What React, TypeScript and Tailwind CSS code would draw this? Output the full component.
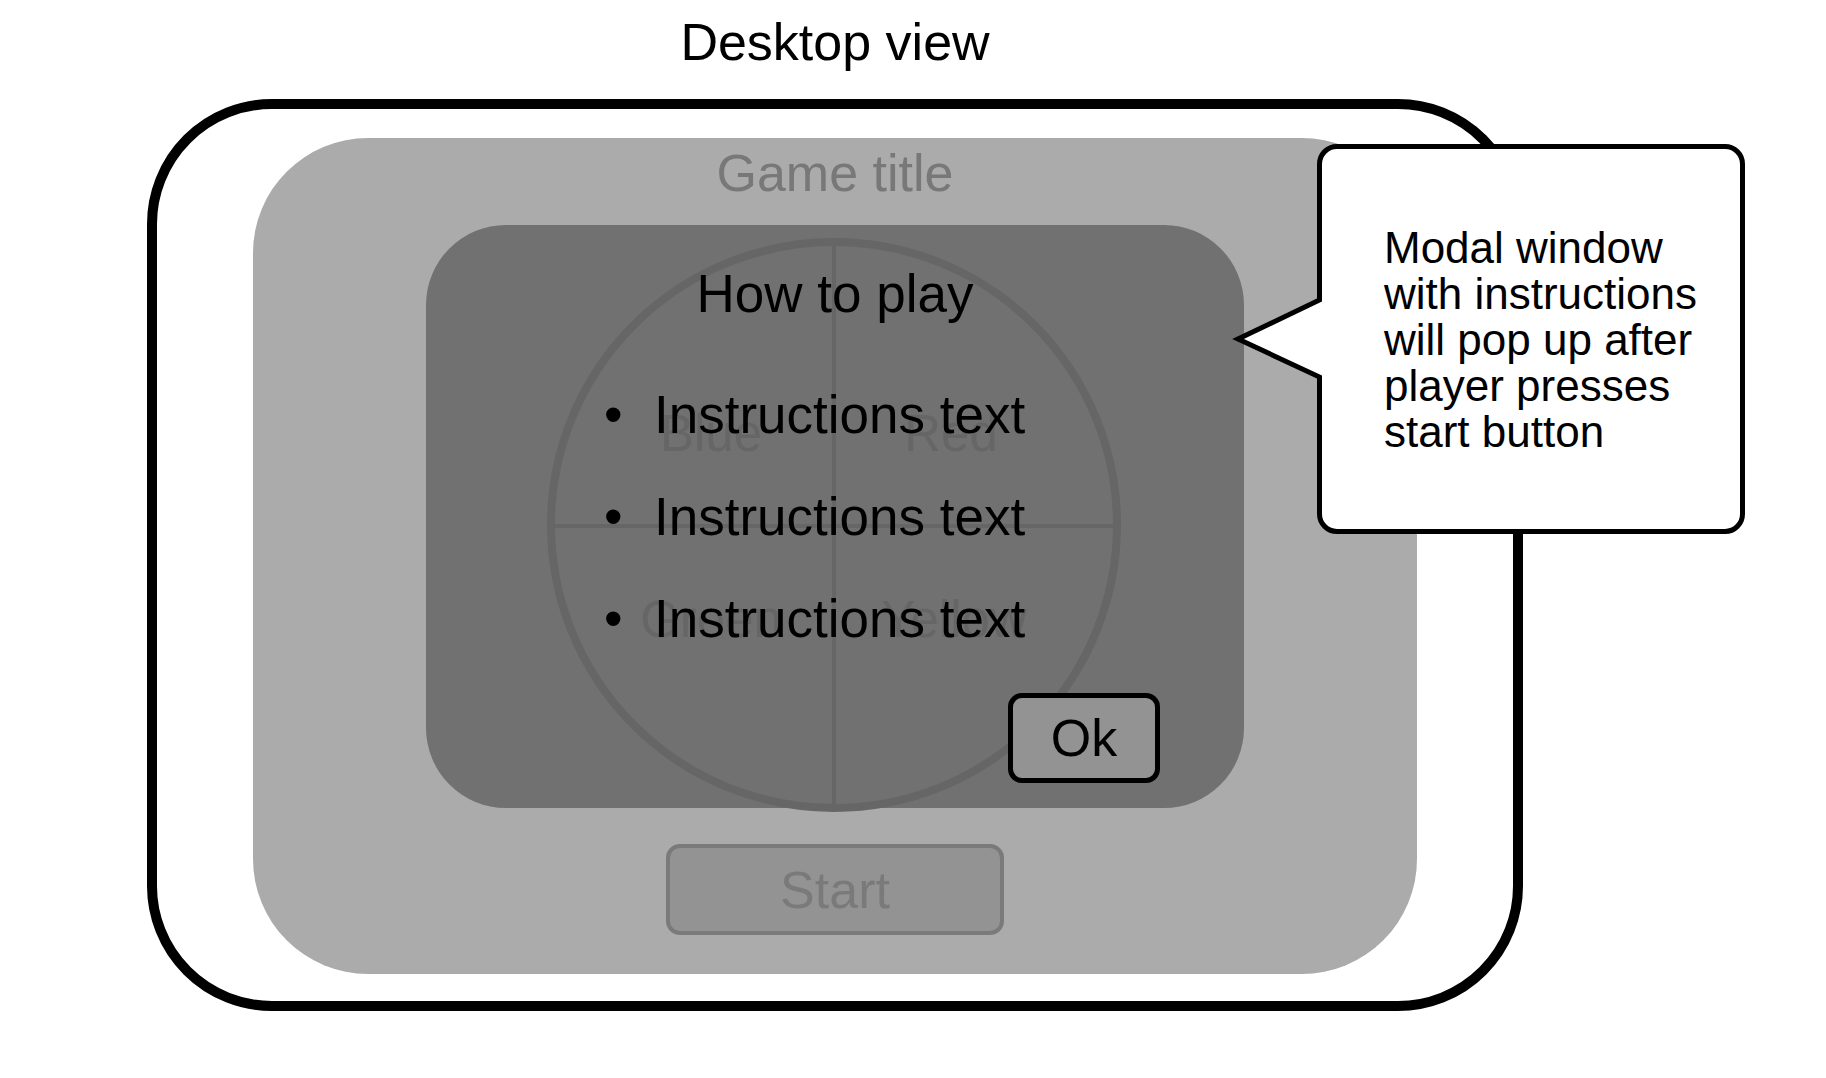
import React from 'react';

const instructions = ['Instructions text', 'Instructions text', 'Instructions text'];

const labels = [
  { text: 'Blue', x: 167, y: 216 },
  { text: 'Red', x: 407, y: 216 },
  { text: 'Green', x: 167, y: 402 },
  { text: 'Yellow', x: 410, y: 402 },
];

// faded game board that sits behind the modal text
const Board: React.FC = () => (
  <svg
    className="absolute left-[118px] top-[10px] overflow-visible"
    width={580}
    height={580}
    viewBox="0 0 580 580"
  >
    <circle cx={290} cy={290} r={283} fill="none" stroke="#666666" strokeWidth={8} />
    <line x1={290} y1={7} x2={290} y2={573} stroke="#666666" strokeWidth={4} />
    <line x1={7} y1={291} x2={573} y2={291} stroke="#666666" strokeWidth={4} />
    {labels.map(l => (
      <text
        key={l.text}
        x={l.x}
        y={l.y}
        textAnchor="middle"
        fill="#666666"
        fontSize={51}
        fontFamily="'Liberation Sans', Arial, sans-serif"
      >
        {l.text}
      </text>
    ))}
  </svg>
);

const Callout: React.FC = () => (
  <div className="absolute left-[1317px] top-[144px] w-[428px] h-[390px] border-[5px] border-black rounded-[20px] bg-white pl-[62px] pt-[76px] text-[44px] leading-[46px]">
    <svg
      className="absolute left-[-87px] top-[145px] overflow-visible"
      width={95}
      height={90}
      viewBox="0 0 95 90"
    >
      <polygon points="3,45 84.5,6 95,6 95,83 84.5,83" fill="#ffffff" />
      <polyline
        points="84.5,0 84.5,6 3,45 84.5,83 84.5,89"
        fill="none"
        stroke="#000000"
        strokeWidth={5}
        strokeLinejoin="miter"
      />
    </svg>
    <p className="relative">
      Modal window
      <br />
      with instructions
      <br />
      will pop up after
      <br />
      player presses
      <br />
      start button
    </p>
  </div>
);

export default function App() {
  return (
    <div className="relative w-[1826px] h-[1078px] overflow-hidden bg-white text-black font-['Liberation_Sans',Arial,sans-serif]">
      <div className="ml-[147px] w-[1376px] pt-[16px] flex flex-col items-center">
        <h1 className="text-[52px] leading-[52px] font-normal">Desktop view</h1>

        {/* device frame */}
        <div className="mt-[31px] w-[1376px] h-[912px] rounded-[125px] border-[10px] border-black px-[96px] pt-[29px]">
          <div className="h-[836px] rounded-[115px] bg-[#ababab] flex flex-col items-center">
            <div className="mt-[9px] text-[52px] leading-[52px] text-[#787878]">Game title</div>

            {/* modal */}
            <div className="relative mt-[26px] w-[818px] h-[583px] rounded-[80px] bg-[#717171] flex flex-col">
              <Board />
              <div className="relative pt-[42px] text-center text-[53px] leading-[53px]">How to play</div>
              <ul className="relative mt-[44px] ml-[178px]">
                {instructions.map((item, i) => (
                  <li key={i} className="flex text-[53px] leading-[102px]">
                    <span className="w-[50px]">•</span>
                    <span>{item}</span>
                  </li>
                ))}
              </ul>
              <div className="relative mt-[23px] self-end mr-[84px] w-[152px] h-[90px] border-[5px] border-black rounded-[14px] bg-[#939393] flex items-center justify-center text-[52px] leading-none">
                Ok
              </div>
            </div>

            <div className="mt-[36px] w-[338px] h-[91px] border-4 border-[#7a7a7a] rounded-[14px] bg-[#939393] flex items-center justify-center text-[52px] leading-none text-[#7a7a7a]">
              Start
            </div>
          </div>
        </div>
      </div>

      <Callout />
    </div>
  );
}
